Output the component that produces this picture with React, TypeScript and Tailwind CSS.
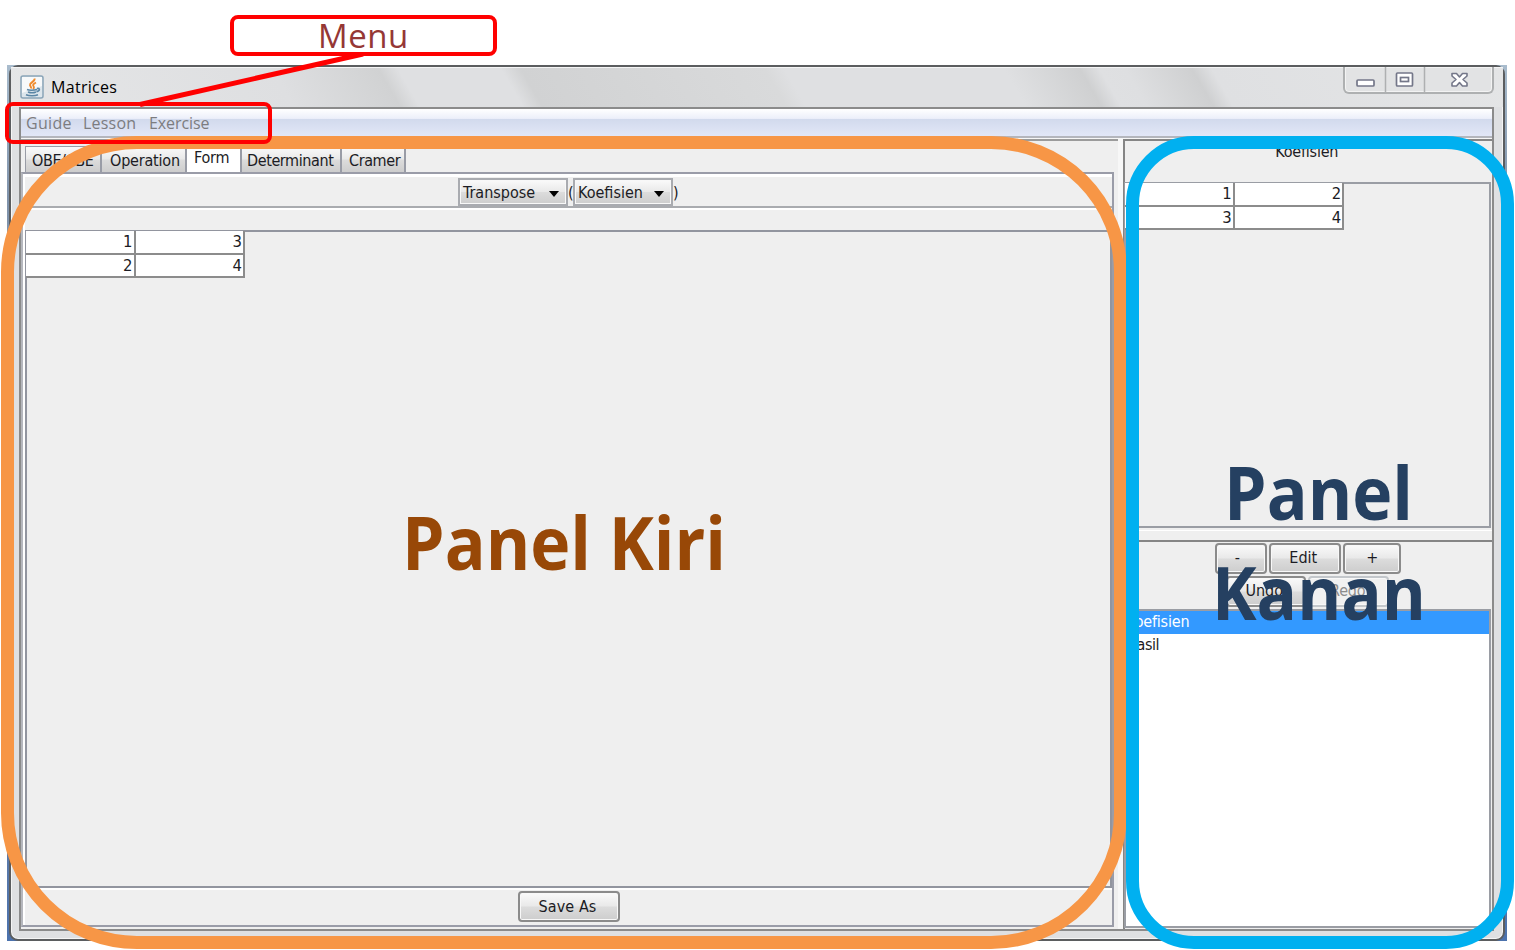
import type { ReactNode } from "react";

const FACE = "bg-[linear-gradient(#fafafa_0%,#e9e9e9_48%,#dcdcdc_52%,#cdcdcd_100%)]";

function Tab({ label, className }: { label: string; className: string }) {
  return (
    <div className={`flex h-[26px] items-center border-r-2 border-t border-r-[#999ca6] border-t-[#999ca6] pt-[2px] ${FACE} ${className}`}>
      {label}
    </div>
  );
}

function Button({ children, className, disabled }: { children: ReactNode; className: string; disabled?: boolean }) {
  return (
    <button
      className={`flex shrink-0 items-center justify-center rounded-[4px] border-2 shadow-[inset_0_0_0_1px_#f8f8f8] ${
        disabled ? "border-[#c3c7cb] bg-[#f1f1f1] text-[#8d8d8d]" : `border-[#8b8b8b] ${FACE}`
      } ${className}`}
    >
      {children}
    </button>
  );
}

function Combo({ label, className }: { label: string; className: string }) {
  return (
    <div className={`mt-px flex h-[28px] items-center justify-between border-2 border-[#a9abb0] pl-[3px] pr-[6px] tracking-[0px] shadow-[inset_0_0_0_1px_#f8f8f8] ${FACE} ${className}`}>
      <span className="pt-px">{label}</span>
      <svg width="12" height="7" viewBox="0 0 12 7" className="mt-[5px]">
        <path d="M1 0h10L6 6z" fill="#000" />
      </svg>
    </div>
  );
}

function Matrix({ rows }: { rows: number[][] }) {
  return (
    <div className="-ml-px -mt-px w-[220px]">
      {rows.map((row, i) => (
        <div key={i} className="flex">
          {row.map((value, j) => (
            <div key={j} className="h-[23.5px] w-[109.5px] border-b-2 border-r-2 border-[#8c8c8c] bg-white pr-px text-right text-[16.5px] leading-[22px] tracking-[0px]">
              {value}
            </div>
          ))}
        </div>
      ))}
    </div>
  );
}

function JavaIcon() {
  return (
    <svg width="24" height="24" viewBox="0 0 24 24">
      <rect x="1" y="1" width="22" height="22" rx="2" fill="#dde6ec" stroke="#8aa5b8" strokeWidth="1.5" />
      <path d="M2 2h20v9L2 18z" fill="#f7f9fa" />
      <path d="M14.500 3.500c1 3-5 4-4.500 6.500.2 1.200 1.500 1.800 1 3.500M16 7.500c-3 1.500-3.500 2.500-2.300 4 .6.900.2 1.800-.7 2.500" fill="none" stroke="#ef8a2c" strokeWidth="1.900" />
      <path d="M7 14.500c2 1 7 1 10 0M8 17c2 .8 6 .8 8 0M6 19.800c3 1.200 9 1.200 12 0M17 13.500c3-.6 3.500 2-.5 3.200" fill="none" stroke="#5b86a5" strokeWidth="1.600" />
    </svg>
  );
}

function TitleBar() {
  return (
    <div className="flex h-[40px] justify-between pl-[9px]">
      <div className="flex h-[40px] items-center gap-[7px]">
        <JavaIcon />
        <span className="font-['Open_Sans','Noto_Sans',sans-serif] text-[16px] tracking-[0.3px] text-black">Matrices</span>
      </div>
      <div className="mr-[9px] flex h-[27px] w-[151px] rounded-b-[6px] border-2 border-t-0 border-[#aeb0b1] bg-[#e2e3e4] shadow-[inset_0_0_0_1px_#f3f3f3]">
        <svg width="147" height="25" viewBox="0 0 147 25" fill="none">
          <path d="M40.500 0v25M79.500 0v25" stroke="#aeb0b1" strokeWidth="1.500" />
          <rect x="12" y="13" width="17" height="6" rx="1" fill="#fff" stroke="#747789" strokeWidth="1.700" />
          <rect x="51.500" y="6" width="16" height="13" rx="1" fill="#fff" stroke="#747789" strokeWidth="1.700" />
          <rect x="55.500" y="10.500" width="8" height="4" fill="#fff" stroke="#747789" strokeWidth="1.700" />
          <path d="M107 6.500h4.500l3 3.500 3-3.500h4.500v2.500l-4 3.500 4 3.500V19h-4.500l-3-3.500-3 3.500H107v-3l4-3.500-4-3.500z" fill="#fff" stroke="#747789" strokeWidth="1.600" strokeLinejoin="round" />
        </svg>
      </div>
    </div>
  );
}

function LeftPanel() {
  return (
    <div className="flex w-[1098px] flex-col border-t-2 border-[#9b9b9b] bg-[#efefef]">
      <div className="flex h-[31px] items-end pl-[4px]">
        <Tab label="OBE/CBE" className="w-[77px] border-l border-l-[#999ca6] pl-[6px] tracking-[-0.4px]" />
        <Tab label="Operation" className="w-[85px] pl-[8px]" />
        <div className="h-[27px] w-[53px] bg-white pl-[7px] leading-[25px]">Form</div>
        <Tab label="Determinant" className="w-[102px] border-l-2 border-l-[#999ca6] pl-[5px] tracking-[-0.4px]" />
        <Tab label="Cramer" className="w-[64px] pl-[7px] tracking-[-0.4px]" />
      </div>
      <div className="flex h-[755px] w-[1093px] flex-col border-2 border-l-[#b5b7bd] border-r-[#9a9ca8] border-t-[#9a9ca8] border-b-[#9a9ca8] bg-white pl-[2px] pt-[3px]">
        <div className="flex h-[31px] items-start justify-center border-b-2 border-[#a9abaf] bg-[#efefef]">
          <Combo label="Transpose" className="w-[110px]" />
          <span className="w-[5px] leading-[31px]">(</span>
          <Combo label="Koefisien" className="w-[100px]" />
          <span className="w-[6px] leading-[31px]">)</span>
        </div>
        <div className="mt-[2px] h-[20px] shrink-0 bg-[#efefef]" />
        <div className="h-[658px] shrink-0 border-2 border-[#92959f] bg-[#efefef]">
          <Matrix rows={[[1, 3], [2, 4]]} />
        </div>
        <div className="mt-[2px] flex h-[35px] shrink-0 items-start justify-center bg-[#efefef] pt-px">
          <Button className="h-[31px] w-[102px] pr-[2px] tracking-[0.1px]">Save As</Button>
        </div>
      </div>
    </div>
  );
}

function RightPanel() {
  return (
    <div className="flex w-[369px] flex-col border-l-2 border-t-2 border-[#858585] bg-[#efefef]">
      <div className="h-[41px] w-[363px] text-center leading-[21px]">Koefisien</div>
      <div className="-ml-px h-[346px] w-[367px] border-2 border-[#9a9da4]">
        <Matrix rows={[[1, 2], [3, 4]]} />
      </div>
      <div className="mt-[2px] h-[10px] border-t border-white" />
      <div className="h-[69px] border-t-2 border-[#858585] pt-px">
        <div className="flex gap-[2px] pl-[90px]">
          <Button className="h-[31px] w-[52px] pb-px pr-[8px]">-</Button>
          <Button className="h-[31px] w-[72px] pb-px pr-[4px] tracking-[0px]">Edit</Button>
          <Button className="h-[31px] w-[58px] pb-px">+</Button>
        </div>
        <div className="mt-[2px] flex gap-[2px] pl-[101px]">
          <Button className="h-[31px] w-[80px] pb-px pr-[4px] tracking-[0px]">Undo</Button>
          <Button className="h-[31px] w-[81px] pb-px pr-[2px]" disabled>Redo</Button>
        </div>
      </div>
      <div className="-ml-px h-[319px] w-[367px] border-2 border-[#9a9da4] bg-white">
        <div className="h-[23px] bg-[#3399ff] leading-[22px] text-white">Koefisien</div>
        <div className="h-[23px] leading-[22px] tracking-[-0.5px]">Hasil</div>
      </div>
    </div>
  );
}

function Annotations() {
  return (
    <div className="absolute inset-0 font-['Open_Sans','Noto_Sans',sans-serif] leading-none tracking-[0px]">
      <div className="absolute left-px top-[136px] h-[813px] w-[1126px] rounded-[136px] border-[13px] border-[#f79646]" />
      <div className="absolute left-[1126px] top-[136px] h-[813px] w-[388px] rounded-[68px] border-[13px] border-[#00b0f0]" />
      <svg className="absolute left-[130px] top-[45px]" width="250" height="70" viewBox="130 45 250 70">
        <path d="M363 54L140 104.500" stroke="#f00" strokeWidth="5" />
      </svg>
      <div className="absolute left-[230px] top-[15px] h-[41px] w-[267px] rounded-[8px] border-4 border-[#ff0000] bg-white" />
      <div className="absolute left-[5px] top-[102px] h-[42px] w-[267px] rounded-[8px] border-4 border-[#ff0000]" />
      <div className="absolute left-[318px] top-[19px] text-[33px] tracking-[0.5px] text-[#953735]">Menu</div>
      <div className="absolute left-[402px] top-[505px] origin-left scale-x-[0.93] whitespace-nowrap text-[73px] font-bold text-[#984807]">Panel Kiri</div>
      <div className="absolute left-[1224px] top-[455px] origin-left scale-x-[0.93] text-[73px] font-bold text-[#254061]">Panel</div>
      <div className="absolute left-[1212px] top-[555px] origin-left scale-x-[0.92] text-[73px] font-bold text-[#254061]">Kanan</div>
    </div>
  );
}

export default function App() {
  return (
    <div className="relative h-[950px] w-[1515px] overflow-hidden bg-white pl-[7px] pt-[65px] font-['DejaVu_Sans_Condensed','DejaVu_Sans',sans-serif] text-[16px] tracking-[-0.2px] text-[#1c1c24]">
      <div className="h-[876px] w-[1500px] bg-[linear-gradient(#a9bccd,#8093ab_15%,#7688a0_70%,#4c72ad)] pl-[2px]">
        <div className="h-[876px] w-[1496px] rounded-[9px] border-2 border-[#5b5d5f] bg-[#dfe0e2] shadow-[inset_0_0_0_1px_#f5f5f5]">
          <div className="h-[40px] bg-[linear-gradient(60deg,#e5e6e7_0%,#dedfe1_18.700%,#d1d2d3_25.700%,#dfe0e2_27%,#dfe0e2_33.800%,#d1d2d3_35.100%,#d9dadb_51.200%,#dfe0e2_52.500%,#dfe0e2_67%,#cfd0d1_72%,#dfe0e2_73.300%,#dedfe1_75%,#cfd0d1_79.400%,#dfe0e2_80.700%,#e4e5e6_100%)] shadow-[inset_0_1px_#f5f5f5]">
            <TitleBar />
          </div>
          <div className="ml-[8px] h-[824px] w-[1475px] border-2 border-[#8b8b8b] bg-[#f7f7f7]">
            <div className="flex h-[29px] items-center border-b-2 border-[#b4b6bd] bg-[linear-gradient(#ffffff_0%,#eceffa_35%,#d2daed_38%,#e2e7f7_100%)] pl-[5px] font-['Open_Sans','Noto_Sans',sans-serif] text-[16px] text-[#7c7c80]">
              <span className="w-[57px] tracking-[0.3px]">Guide</span>
              <span className="w-[66px] tracking-[0.2px]">Lesson</span>
              <span className="tracking-[-0.1px]">Exercise</span>
            </div>
            <div className="flex h-[791px] gap-[5px] pt-px">
              <LeftPanel />
              <RightPanel />
            </div>
          </div>
        </div>
      </div>
      <Annotations />
    </div>
  );
}
